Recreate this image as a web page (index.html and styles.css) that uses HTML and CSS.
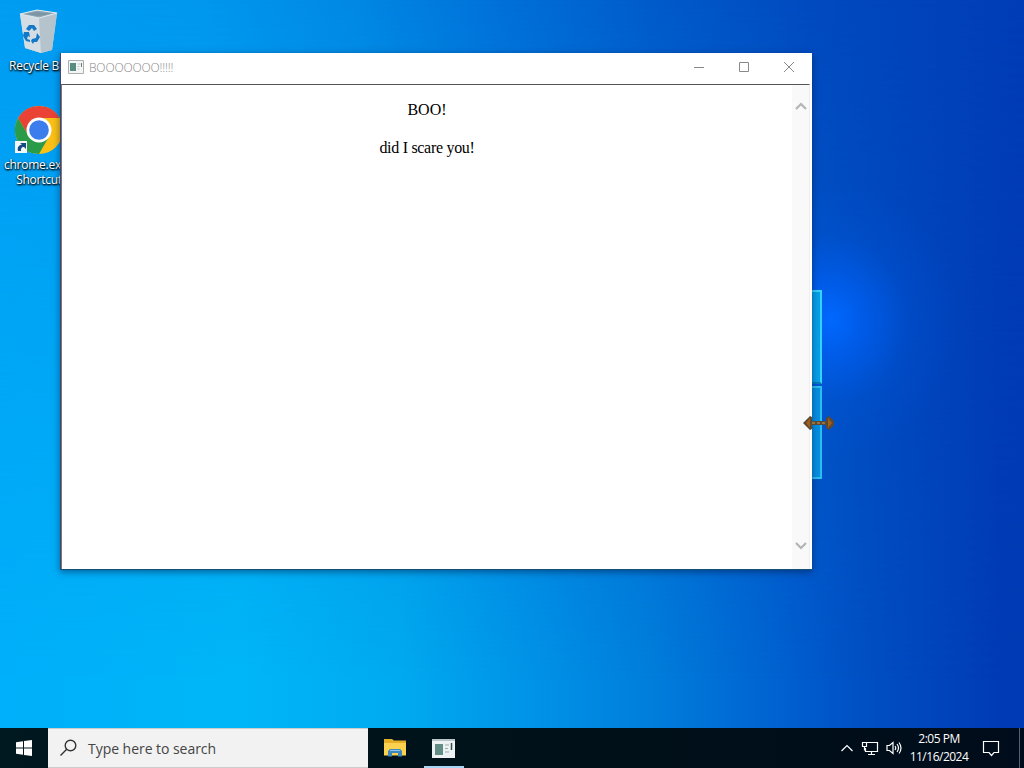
FILE: index.html
```html
<!DOCTYPE html>
<html lang="en">
<head>
    <meta charset="UTF-8">
    <meta name="viewport" content="width=device-width, initial-scale=1.0">
    <title>Desktop</title>
    <link rel="stylesheet" href="styles.css">
</head>
<body>
    <div class="desktop">
        <!-- Wallpaper logo -->
        <div class="glow"></div>
        <div class="logo-pane pane-top"></div>
        <div class="logo-pane pane-bottom"></div>

        <!-- Desktop icons -->
        <div class="icons">
            <div class="icon">
                <svg width="40" height="46" viewBox="0 0 40 46">
                    <path d="M1 5 18 1 38 4 33 41 22 44 6 39z" fill="#ccd6dc"/>
                    <path d="M1 5 20 9 22 44 6 39z" fill="#d3dde3"/>
                    <path d="M20 9 38 4 33 41 22 44z" fill="#b5c3cc"/>
                    <path d="M1 5 18 1 38 4 20 9z" fill="#8fa5b3" stroke="#dbe8ef" stroke-width="1.2"/>
                    <path d="M6 5 18 3 33 4.500 20 7z" fill="#7b95a4"/>
                    <path d="M7 20l3-4h5l3 4-3 2-2-3-3 3zM5 23l5 0 1 5-2-1-1 3 3 1v2l-4-1-3-5zM13 30l4-1 1-5 3 4-3 5h-3l-1 2-2-3z" fill="#1478c8"/>
                </svg>
                <span>Recycle Bin</span>
            </div>
            <div class="icon chrome">
                <svg width="50" height="50" viewBox="0 0 50 50">
                    <circle cx="25" cy="25" r="24" fill="#fbc116"/>
                    <path d="M25 13H45.800A24 24 0 0 0 4.200 13L14.600 31z" fill="#ea4335"/>
                    <path d="M4.200 13A24 24 0 0 0 25 49L35.400 31 25 25 14.600 31z" fill="#2a9b48"/>
                    <circle cx="25" cy="25" r="12.500" fill="#fff"/>
                    <circle cx="25" cy="25" r="9.800" fill="#3b7ded"/>
                    <path d="M1 36h12v12H1z" fill="#f4f6f8"/>
                    <path d="M4 46c-1-4 1-6 4-6.500L6 38h6v6l-2-2c-3 0-3 2-3 4z" fill="#164b83"/>
                </svg>
                <span>chrome.exe - Shortcut</span>
            </div>
        </div>

        <!-- Window -->
        <div class="window">
            <div class="titlebar">
                <svg width="16" height="14" viewBox="0 0 16 14">
                    <path d="M.5.5h15v13H.5z" fill="#f4f6f6" stroke="#a7b0b0"/>
                    <path d="M2 3h6v8H2z" fill="#5a8b80"/>
                    <path d="M9.500 4h3M9.500 6.500h2M9.500 9h2" stroke="#bbc4c4"/>
                    <path d="M13.500 3v4" stroke="#777"/>
                </svg>
                <span class="title">BOOOOOOO!!!!!</span>
                <div class="controls">
                    <svg width="12" height="12" viewBox="0 0 12 12"><path d="M1 6.500h10"/></svg>
                    <svg width="12" height="12" viewBox="0 0 12 12"><path d="M1.500 1.500h9v9h-9z"/></svg>
                    <svg width="12" height="12" viewBox="0 0 12 12"><path d="M1 1l10 10M11 1L1 11"/></svg>
                </div>
            </div>
            <div class="content">
                <div class="page">
                    <p>BOO!</p>
                    <p class="tight">did I scare you!</p>
                </div>
                <div class="scrollbar">
                    <svg width="14" height="10" viewBox="0 0 14 10"><path d="M2 8l5-5 5 5"/></svg>
                    <svg width="14" height="10" viewBox="0 0 14 10"><path d="M2 2l5 5 5-5"/></svg>
                </div>
            </div>
        </div>

        <!-- Resize cursor -->
        <svg class="cursor" width="32" height="18" viewBox="0 0 32 18">
            <path d="M0 9 7 2l2 1v4h14V4l3-2 5 5v4l-5 5-3-2v-3H9v4l-2 1z" fill="#5d4a35"/>
            <path d="M3 9 7 4v10zM29 9l-4-5v10z" fill="#a0601c"/>
            <path d="M9 9h14" stroke="#a8824a" stroke-width="1.500" stroke-dasharray="3 2"/>
        </svg>
    </div>

    <!-- Taskbar -->
    <div class="taskbar">
        <div class="start">
            <svg width="16" height="16" viewBox="0 0 16 16"><path d="M0 2.300 7 1.300V7.500H0zM8 1.100 16 0V7.500H8zM0 8.500H7V14.700L0 13.700zM8 8.500H16V16L8 14.900z" fill="#fff"/></svg>
        </div>
        <div class="search">
            <svg width="18" height="18" viewBox="0 0 18 18"><circle cx="10.500" cy="6.500" r="5.300"/><path d="M6.700 10.300.5 16.500"/></svg>
            <span>Type here to search</span>
        </div>
        <div class="task">
            <svg width="22" height="18" viewBox="0 0 22 18">
                <path d="M0 0h8l2 1.500h12V16H0z" fill="#e6ad27"/>
                <path d="M0 4h22v12.500H0z" fill="#fbd14f"/>
                <path d="M4 17.500V12l2-2h10l2 2v5.500h-4V14H8v3.500z" fill="#3e87bd"/>
                <path d="M6 11.500h10" stroke="#8ac8ed"/>
            </svg>
        </div>
        <div class="task active">
            <svg width="23" height="19" viewBox="0 0 23 19">
                <path d="M0 0h23v19H0z" fill="#edf2f2"/>
                <path d="M0 1h23" stroke="#bac5c8" stroke-width="2"/>
                <path d="M3 5h8v11H3z" fill="#628d87"/>
                <path d="M13 6h4M13 9.500h3M13 13h4" stroke="#9eabab"/>
                <path d="M19.500 4v7" stroke="#3c4a4c" stroke-width="1.500"/>
            </svg>
        </div>
        <div class="tray">
            <svg width="14" height="8" viewBox="0 0 14 8"><path d="M1.500 7 7 1.500 12.500 7"/></svg>
            <svg width="18" height="15" viewBox="0 0 18 15"><path d="M6 1.500h10.500v9H4.500V7M10.500 10.500v3M7 13.500h7M1.500 1.500h4v4h-4zM3.500 5.500v4"/></svg>
            <svg width="16" height="14" viewBox="0 0 16 14"><path d="M1 4.500h2.500L7 1.500v11L3.500 9.500H1zM9 5q1.500 2 0 4M11 3q3 4 0 8M13 1.500q4 5.500 0 11"/></svg>
            <div class="clock">
                <span>2:05 PM</span>
                <span>11/16/2024</span>
            </div>
            <svg width="18" height="17" viewBox="0 0 18 17"><path d="M1.500 1.500h15v11H12L9.500 15.500 7 12.500H1.500z"/></svg>
            <div class="show-desktop"></div>
        </div>
    </div>
</body>
</html>
```
FILE: styles.css
```css
* {
    box-sizing: border-box;
}
body {
    margin: 0;
    width: 1024px;
    height: 768px;
    overflow: hidden;
    display: flex;
    flex-direction: column;
    font-family: "Open Sans", "Noto Sans", sans-serif;
}
.desktop {
    position: relative;
    flex: 1;
    background: linear-gradient(90deg, #00b0fa 0, #00b6f8 240px, #00aaf0 400px, #0095e8 520px, #007edc 650px, #0061d0 780px, #0050c4 860px, #003bb5 1000px);
}
/* darker sky that fades out towards the bottom */
.desktop::before {
    content: "";
    position: absolute;
    inset: 0;
    background: linear-gradient(90deg, #009cf2 0, #0097ee 200px, #0088e4 350px, #0070d8 500px, #005bca 650px, #004abf 810px, #003cb5 1024px);
    -webkit-mask-image: linear-gradient(#000, transparent 680px);
    mask-image: linear-gradient(#000, transparent 680px);
}
.glow {
    position: absolute;
    left: 700px;
    top: 180px;
    width: 260px;
    height: 280px;
    background: radial-gradient(closest-side, #0068ff, rgba(0, 98, 248, 0.7) 25%, rgba(0, 88, 225, 0.25) 60%, rgba(0, 80, 210, 0));
}
.logo-pane {
    position: absolute;
    left: 700px;
    width: 122px;
    background: #079fe9;
    border: 2px solid #35d4fa;
}
.pane-top {
    top: 290px;
    height: 94px;
    border-bottom-color: #0878b8;
}
.pane-bottom {
    top: 386px;
    height: 93px;
    background: #078fe1;
    border-color: #2bbff0;
}
.icons {
    position: relative;
    display: flex;
    flex-direction: column;
    width: 78px;
    padding-top: 9px;
}
.icon {
    display: flex;
    flex-direction: column;
    align-items: center;
    height: 96px;
    color: white;
    font-size: 12px;
    line-height: 15px;
    letter-spacing: -0.25px;
    text-align: center;
    text-shadow: 1px 1px 2px #000, 0 1px 2px #000;
}
.icon span {
    margin-top: 3px;
}
.icon.chrome span {
    margin-top: 2px;
}
.window {
    position: absolute;
    left: 60px;
    top: 53px;
    width: 752px;
    height: 517px;
    display: flex;
    flex-direction: column;
    background: white;
    border-left: 1px solid #447;
    border-bottom: 1px solid #125078;
    box-shadow: 0 2px 7px rgba(0, 20, 60, 0.5);
}
.titlebar {
    display: flex;
    align-items: center;
    height: 31px;
    padding: 0 17px 3px 7px;
}
.title {
    flex: 1;
    margin-left: 5px;
    color: #8a8a8a;
    font-size: 12px;
    font-weight: 300;
    letter-spacing: -0.15px;
}
.controls {
    display: flex;
    gap: 33px;
}
.controls svg {
    fill: none;
    stroke: #888;
    stroke-width: 1;
}
.content {
    flex: 1;
    display: flex;
    margin-right: 2px;
    border-top: 1px solid #555;
    border-left: 1px solid #777;
    border-right: 1px solid #eee;
}
.page {
    flex: 1;
    padding-top: 16px;
    font-family: "Liberation Serif", serif;
    font-size: 16px;
    line-height: 18px;
    text-align: center;
}
.page p {
    margin: 0 0 20px;
}
.page .tight {
    letter-spacing: -0.3px;
}
.scrollbar {
    display: flex;
    flex-direction: column;
    align-items: center;
    justify-content: space-between;
    width: 17px;
    padding: 16px 0 18px;
    background: #f9f9f9;
}
.scrollbar svg {
    fill: none;
    stroke: #b2b5b5;
    stroke-width: 2.2;
}
.cursor {
    position: absolute;
    left: 803px;
    top: 414px;
}
.taskbar {
    display: flex;
    height: 40px;
    background: linear-gradient(90deg, #001820, #001018 60%, #000c1b);
    color: white;
}
.start {
    display: flex;
    align-items: center;
    justify-content: center;
    width: 48px;
}
.search {
    display: flex;
    align-items: center;
    gap: 10px;
    width: 320px;
    margin-right: 3px;
    padding-left: 12px;
    background: #f2f2f2;
    border: 1px solid #ccc;
    border-width: 1px 0;
    color: #444;
    font-size: 14px;
    letter-spacing: -0.04px;
}
.search svg {
    fill: none;
    stroke: #333;
    stroke-width: 1.4;
}
.task {
    display: flex;
    align-items: center;
    justify-content: center;
    width: 48px;
}
.task.active {
    background: linear-gradient(#a5d5f5, #a5d5f5) 5px bottom / 40px 2px no-repeat;
}
.tray {
    flex: 1;
    display: flex;
    align-items: center;
    justify-content: flex-end;
}
.tray svg {
    margin-right: 7px;
    fill: none;
    stroke: white;
    stroke-width: 1.2;
}
.clock {
    display: flex;
    flex-direction: column;
    width: 60px;
    margin: 0 13px 0 0;
    font-size: 12px;
    line-height: 18px;
    letter-spacing: -0.5px;
    text-align: center;
}
.show-desktop {
    width: 5px;
    height: 40px;
    margin-left: 12px;
    border-left: 1px solid #536170;
}
```
